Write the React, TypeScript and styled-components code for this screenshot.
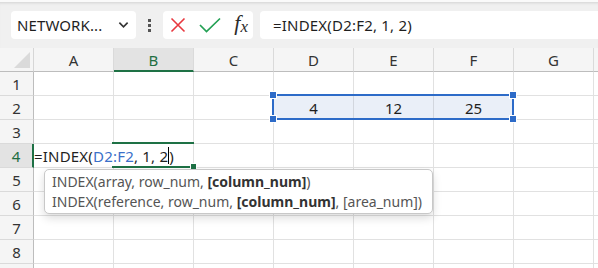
import React from 'react';
import styled, { createGlobalStyle } from 'styled-components';

const GlobalStyle = createGlobalStyle`
  html, body {
    margin: 0;
    padding: 0;
    background: #ffffff;
    font-family: 'Noto Sans', 'Open Sans', sans-serif;
  }
`;

// H is only the sliver past G, its letter is off screen
const COLUMNS = ['A', 'B', 'C', 'D', 'E', 'F', 'G', 'H'];
const ROWS = [1, 2, 3, 4, 5, 6, 7, 8, 9];
const VALUES: Record<string, string> = { D2: '4', E2: '12', F2: '25' };

const App = () => {
  return (
    <>
      <GlobalStyle />
      <Page>
        <Toolbar>
          <NameBox>
            <NameText>NETWORK...</NameText>
            <Chevron viewBox="0 0 12 8">
              <path d="M1.5 1.5 L6 6 L10.5 1.5" />
            </Chevron>
          </NameBox>
          <Dots>
            <span />
            <span />
            <span />
          </Dots>
          <ButtonGroup>
            <IconButton>
              <svg width="16" height="16" viewBox="0 0 16 16">
                <path d="M1.5 1.5 L14.5 14.5 M14.5 1.5 L1.5 14.5" stroke="#e8383f" strokeWidth="1.6" fill="none" />
              </svg>
            </IconButton>
            <IconButton>
              <svg width="22" height="16" viewBox="0 0 22 16">
                <path d="M1 8 L7.5 14.5 L21 1.5" stroke="#23a054" strokeWidth="1.7" fill="none" />
              </svg>
            </IconButton>
            <Fx>
              f<sub>x</sub>
            </Fx>
          </ButtonGroup>
          <FormulaBox>=INDEX(D2:F2, 1, 2)</FormulaBox>
        </Toolbar>

        <Sheet>
          <HeaderRow>
            <Corner>
              <CornerTriangle />
            </Corner>
            {COLUMNS.map((c) => (
              <ColHeader key={c} $active={c === 'B'}>
                {c === 'H' ? '' : c}
              </ColHeader>
            ))}
          </HeaderRow>
          {ROWS.map((r) => (
            <Row key={r}>
              <RowHeader $active={r === 4}>{r < 9 ? r : ''}</RowHeader>
              {COLUMNS.map((c) => {
                const id = `${c}${r}`;
                return (
                  <Cell key={id} $selected={r === 2 && ['D', 'E', 'F'].includes(c)}>
                    {VALUES[id]}
                    {id === 'A4' && (
                      <CellFormula>
                        =INDEX(<Ref>D2:F2</Ref>, 1, 2<Caret />)
                      </CellFormula>
                    )}
                  </Cell>
                );
              })}
            </Row>
          ))}

          <Selection>
            <Handle $x="left" $y="top" />
            <Handle $x="right" $y="top" />
            <Handle $x="left" $y="bottom" />
            <Handle $x="right" $y="bottom" />
          </Selection>

          <EditCell>
            <FillHandle />
          </EditCell>

          <Tip>
            <TipLine>
              INDEX(array, row_num, <b>[column_num]</b>)
            </TipLine>
            <TipLine>
              INDEX(reference, row_num, <b>[column_num]</b>, [area_num])
            </TipLine>
          </Tip>
        </Sheet>
      </Page>
    </>
  );
};

export default App;

const Page = styled.div`
  width: 598px;
  height: 268px;
  overflow: hidden;
  background: #ffffff;
`;

const Toolbar = styled.div`
  height: 48px;
  box-sizing: border-box;
  background: #f0f0f0;
  border-top: 2px solid #fafafa;
  box-shadow: inset 0 3px 3px -2px rgba(0, 0, 0, 0.12);
  display: flex;
  align-items: center;
  padding: 0 0 0 11px;
`;

const NameBox = styled.div`
  width: 125px;
  height: 28px;
  box-sizing: border-box;
  background: #ffffff;
  border-radius: 4px;
  display: flex;
  align-items: center;
  justify-content: space-between;
  padding: 0 7px 0 6px;
`;

const NameText = styled.span`
  font-size: 15px;
  color: #1f1f1f;
  letter-spacing: 0.1px;
`;

const Chevron = styled.svg`
  width: 11px;
  height: 8px;
  fill: none;
  stroke: #333;
  stroke-width: 1.8;
`;

const Dots = styled.div`
  width: 27px;
  display: flex;
  flex-direction: column;
  align-items: center;
  gap: 2px;
  span {
    width: 3px;
    height: 3px;
    background: #555;
  }
`;

const ButtonGroup = styled.div`
  width: 90px;
  height: 28px;
  box-sizing: border-box;
  background: #ffffff;
  border-radius: 4px;
  display: flex;
  align-items: center;
  padding: 0 5px 0 7px;
  justify-content: space-between;
`;

const IconButton = styled.div`
  display: flex;
  align-items: center;
  svg {
    display: block;
  }
`;

const Fx = styled.span`
  font-family: 'Liberation Serif', 'DejaVu Serif', serif;
  font-style: italic;
  font-size: 22px;
  color: #2b2b2b;
  line-height: 1;
  margin-top: -4px;
  sub {
    font-size: 17px;
    vertical-align: -2px;
    margin-left: 0;
  }
`;

const FormulaBox = styled.div`
  margin-left: 7px;
  flex: 1;
  height: 28px;
  box-sizing: border-box;
  background: #ffffff;
  border-radius: 4px 0 0 4px;
  display: flex;
  align-items: center;
  padding-left: 13px;
  font-size: 15px;
  letter-spacing: 0.2px;
  color: #1f1f1f;
`;

const Sheet = styled.div`
  position: relative;
`;

const HeaderRow = styled.div`
  display: flex;
  height: 24px;
  background: #f5f5f5;
`;

const Corner = styled.div`
  width: 34px;
  flex: none;
  box-sizing: border-box;
  border-right: 1px solid #d6d6d6;
  border-bottom: 1px solid #bdbdbd;
  position: relative;
`;

const CornerTriangle = styled.div`
  position: absolute;
  right: 3px;
  bottom: 3px;
  width: 0;
  height: 0;
  border-left: 16px solid transparent;
  border-bottom: 16px solid #dadada;
`;

const ColHeader = styled.div<{ $active?: boolean }>`
  width: 80px;
  flex: none;
  box-sizing: border-box;
  border-right: 1px solid #dadada;
  border-bottom: ${(p) => (p.$active ? '2px solid #1e7145' : '1px solid #bdbdbd')};
  background: ${(p) => (p.$active ? '#e3e3e3' : 'transparent')};
  color: ${(p) => (p.$active ? '#1e6e42' : '#333')};
  font-size: 15px;
  display: flex;
  align-items: center;
  justify-content: center;
  padding-top: ${(p) => (p.$active ? '1px' : '0')};
`;

const Row = styled.div`
  display: flex;
  height: 24px;
`;

const RowHeader = styled.div<{ $active?: boolean }>`
  width: 34px;
  flex: none;
  box-sizing: border-box;
  background: ${(p) => (p.$active ? '#e3e3e3' : '#f5f5f5')};
  border-right: ${(p) => (p.$active ? '2px solid #1e7145' : '1px solid #bdbdbd')};
  border-bottom: 1px solid #dadada;
  color: ${(p) => (p.$active ? '#1e6e42' : '#333')};
  font-size: 15px;
  display: flex;
  align-items: center;
  justify-content: center;
`;

const Cell = styled.div<{ $selected?: boolean }>`
  width: 80px;
  flex: none;
  box-sizing: border-box;
  border-right: 1px solid ${(p) => (p.$selected ? '#d2d6de' : '#e1e1e1')};
  border-bottom: 1px solid #e1e1e1;
  background: ${(p) => (p.$selected ? '#eaeff8' : '#ffffff')};
  font-size: 15px;
  color: #1f1f1f;
  display: flex;
  align-items: center;
  justify-content: center;
  position: relative;
`;

const CellFormula = styled.div`
  position: absolute;
  left: 0;
  top: 0;
  height: 23px;
  display: flex;
  align-items: center;
  white-space: nowrap;
  font-size: 15px;
  letter-spacing: 0.2px;
  color: #1f1f1f;
  z-index: 2;
  background: #ffffff;
  padding-right: 1px;
`;

const Ref = styled.span`
  color: #3a70c9;
`;

const Caret = styled.span`
  display: inline-block;
  width: 1px;
  height: 17px;
  background: #000;
  vertical-align: -3px;
`;

const Selection = styled.div`
  position: absolute;
  left: 272px;
  top: 46px;
  width: 242px;
  height: 26px;
  box-sizing: border-box;
  border: 2px solid #2d6bc8;
  pointer-events: none;
`;

const Handle = styled.div<{ $x: 'left' | 'right'; $y: 'top' | 'bottom' }>`
  position: absolute;
  width: 6px;
  height: 6px;
  background: #2d6bc8;
  border: 1px solid #ffffff;
  box-sizing: content-box;
  ${(p) => (p.$x === 'left' ? 'left: -5px;' : 'right: -5px;')}
  ${(p) => (p.$y === 'top' ? 'top: -5px;' : 'bottom: -5px;')}
`;

const EditCell = styled.div`
  position: absolute;
  left: 112px;
  top: 94px;
  width: 82px;
  height: 26px;
  box-sizing: border-box;
  border-top: 2px solid #1e7145;
  border-bottom: 2px solid #1e7145;
  z-index: 3;
  pointer-events: none;
`;

const FillHandle = styled.div`
  position: absolute;
  right: -3px;
  bottom: -4px;
  width: 5px;
  height: 5px;
  background: #1e7145;
  border: 1px solid #ffffff;
`;

const Tip = styled.div`
  position: absolute;
  left: 44px;
  top: 121px;
  width: 389px;
  height: 45px;
  box-sizing: border-box;
  background: #ffffff;
  border: 1px solid #c8c8c8;
  border-radius: 5px;
  box-shadow: 0 4px 10px rgba(0, 0, 0, 0.14);
  padding: 2px 0 0 7px;
  z-index: 4;
`;

const TipLine = styled.div`
  font-size: 14px;
  line-height: 20px;
  color: #555;
  white-space: nowrap;
  b {
    color: #333;
    font-weight: 700;
  }
`;
